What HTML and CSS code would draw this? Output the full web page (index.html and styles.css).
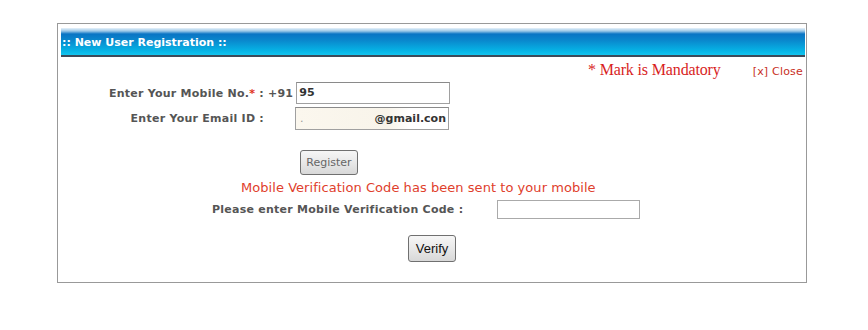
FILE: index.html
```html
<!DOCTYPE html>
<html>
<head>
<meta charset="utf-8">
<link rel="stylesheet" href="styles.css">
</head>
<body>
<div class="panel">
  <div class="head">:: New User Registration ::</div>
  <div class="topline">
    <span class="mand">* Mark is Mandatory</span>
    <a class="close">[x] Close</a>
  </div>
  <div class="fields">
    <div class="label">Enter Your Mobile No.<span class="star">*</span> :</div>
    <div class="value"><span class="code">+91</span><span class="input mobile">95</span></div>
    <div class="label">Enter Your Email ID :</div>
    <div class="value"><span class="input email"><span class="blur">.</span>@gmail.con</span></div>
  </div>
  <div class="regrow"><span class="btn reg">Register</span></div>
  <div class="msg">Mobile Verification Code has been sent to your mobile</div>
  <div class="coderow">
    <span class="label">Please enter Mobile Verification Code :</span>
    <span class="input vcode"></span>
  </div>
  <div class="verrow"><span class="btn verify">Verify</span></div>
</div>
</body>
</html>
```
FILE: styles.css
```css
html, body { margin: 0; padding: 0; background: #fff; }
body { font-family: "DejaVu Sans", Verdana, sans-serif; }
.panel {
  margin: 23px 0 0 57px;
  width: 744px;
  height: 254px;
  border: 1px solid #999;
  padding: 4px 1px 0 3px;
}
.head {
  height: 27px;
  background: linear-gradient(#e8f2fa 0px, #9cc8e8 3px, #0a74c4 6px, #0a86cc 12px, #06b4e6 23px, #12c4ee 27px);
  border-bottom: 2px solid #3c4a5a;
  color: #fff;
  font-weight: bold;
  font-size: 11px;
  line-height: 29px;
  padding-left: 1px;
  box-sizing: content-box;
}
.topline {
  display: flex;
  justify-content: flex-end;
  align-items: baseline;
  height: 21px;
  padding-top: 4px;
}
.mand {
  font-family: "Liberation Serif", "Times New Roman", serif;
  font-size: 16px;
  color: #d81e1e;
  margin-right: 32px;
  letter-spacing: -0.15px;
}
.close {
  font-size: 11px;
  color: #c8301e;
  margin-right: 2px;
  letter-spacing: 0.2px;
}
.fields {
  display: grid;
  grid-template-columns: 203px auto;
  column-gap: 4px;
  row-gap: 3px;
}
.label {
  color: #555;
  font-weight: bold;
  font-size: 11px;
  letter-spacing: 0.25px;
  text-align: right;
  align-self: center;
}
.star { color: #e03020; }
.value { display: flex; align-items: center; }
.code { color: #555; font-weight: bold; font-size: 11px; letter-spacing: 0.25px; margin-right: 3px; }
.input {
  display: inline-block;
  box-sizing: border-box;
  border: 1px solid #a0a0a0;
  border-top-color: #8a8a8a;
  background: #fff;
  font-size: 11px;
  font-weight: bold;
  color: #333;
}
.mobile { width: 154px; height: 22px; line-height: 20px; padding-left: 2px; }
.email {
  width: 154px; height: 23px; line-height: 21px;
  margin-left: 27px;
  background: linear-gradient(90deg, #fbf7ee, #f8f4ea 60%, #fff 75%);
  display: flex; justify-content: space-between; padding: 0 2px 0 4px;
}
.blur { color: #999; font-weight: normal; }
.regrow { padding: 20px 0 0 239px; height: 25px; }
.btn {
  display: inline-flex;
  align-items: center;
  justify-content: center;
  box-sizing: border-box;
  border: 1px solid #707070;
  border-radius: 3px;
  background: linear-gradient(#f6f6f6, #e8e8e8 50%, #d8d8d8);
}
.reg { width: 58px; height: 25px; font-size: 11px; color: #666; }
.msg {
  font-size: 13px;
  color: #e0402c;
  padding-left: 180px;
  margin-top: 5px;
  line-height: 16px;
  letter-spacing: 0.05px;
}
.coderow {
  display: flex;
  align-items: center;
  padding-left: 151px;
  margin-top: 4px;
}
.coderow .label { width: 285px; text-align: left; }
.vcode { width: 143px; height: 19px; border-color: #aaa; }
.verrow { text-align: center; padding-top: 16px; padding-right: 2px; }
.verify {
  width: 48px; height: 27px;
  font-family: "Liberation Sans", Arial, sans-serif;
  font-size: 13px; color: #111;
}
```
